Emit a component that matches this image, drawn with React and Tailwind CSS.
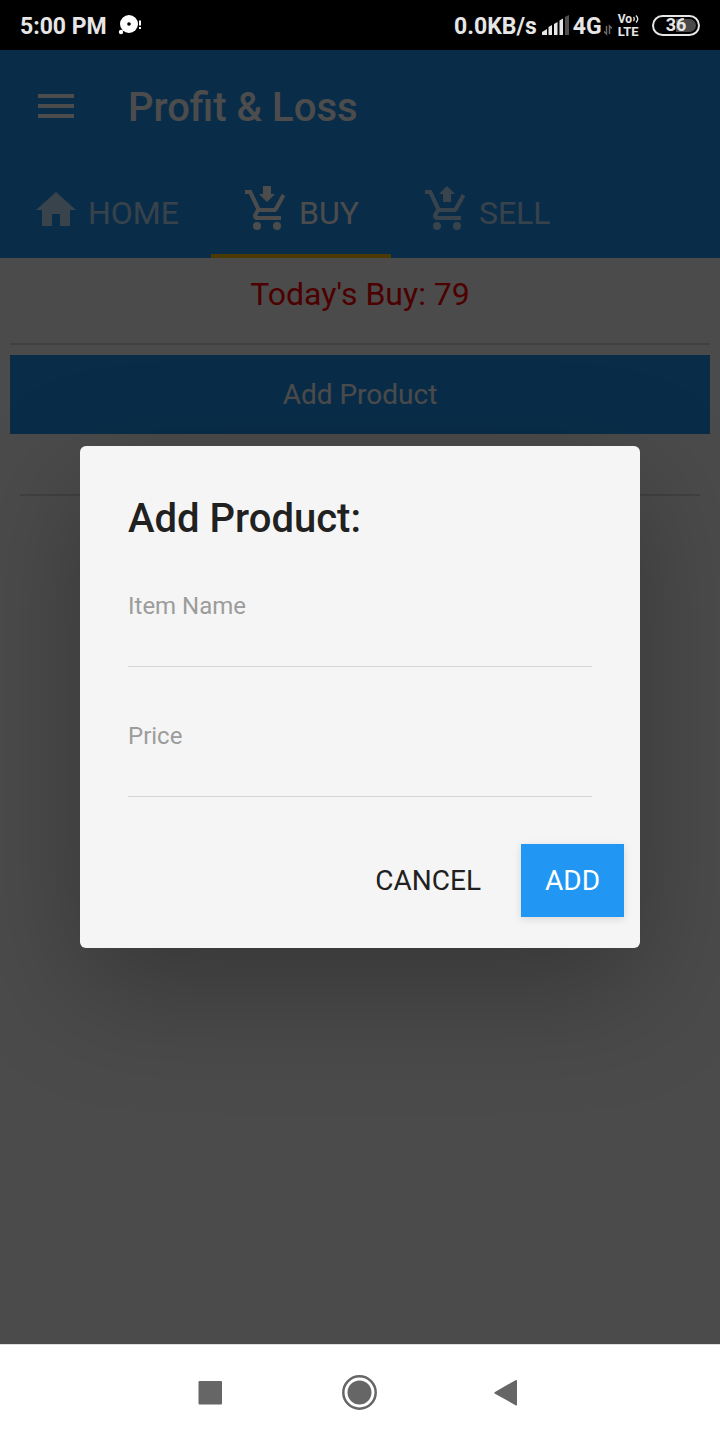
const CART =
  "M7 18a2 2 0 1 0 0 4 2 2 0 0 0 0-4zm10 0a2 2 0 1 0 0 4 2 2 0 0 0 0-4zM7.17 14.75l.03-.12.9-1.63h7.45c.75 0 1.41-.41 1.75-1.03l3.86-7.01L19.42 4h-.01l-1.1 2-2.76 5H8.53l-.13-.27L6.16 6l-.95-2-.94-2H1v2h2l3.6 7.59-1.35 2.45c-.16.28-.25.61-.25.96 0 1.1.9 2 2 2h12v-2H7.42c-.13 0-.25-.11-.25-.25z";
const HOME = "M10 20v-6h4v6h5v-8h3L12 3 2 12h3v8z";
const ARROW_DOWN = "M10 0h4v4h2l-4 4-4-4h2z";
const ARROW_UP = "M12 0l4 4h-2v4h-4V4H8z";

const tabs = [
  { label: "HOME", paths: [HOME] },
  { label: "BUY", paths: [CART, ARROW_DOWN], active: true },
  { label: "SELL", paths: [CART, ARROW_UP] },
];

function StatusBar() {
  return (
    <div className="flex h-[50px] items-center justify-between bg-black px-5 text-[23px] font-bold text-[#e6e6e6]">
      <div className="flex items-center gap-2.5">
        <span className="pt-1">5:00 PM</span>
        <svg className="h-6 w-6" viewBox="0 0 24 24" fill="#fff" aria-hidden="true">
          <circle cx="12" cy="11" r="9" />
          <circle cx="12" cy="11" r="1.8" fill="#000" />
          <circle cx="4" cy="19" r="2.2" />
          <path d="M22 7.500h2v5h-2zM22 14h2v2h-2z" />
        </svg>
      </div>
      <div className="flex items-center">
        <span className="pt-1">0.0KB/s</span>
        <svg className="ml-1 h-6 w-7" viewBox="0 0 28 24" fill="#e6e6e6" aria-hidden="true">
          <path d="M1 22v-3l5-3v6zM7.500 22v-8l3.500-2v10zM13 22V11l3.500-2v13zM18.500 22V7.500l3.500-2V22z" />
          <path d="M24 22V4l4-2v20z" fill="#4f4f4f" />
        </svg>
        <span className="ml-1 pt-1">4G</span>
        <svg className="ml-0.5 h-6 w-2" viewBox="0 0 8 24" fill="none" stroke="#6a6a6a" strokeWidth="1.5" aria-hidden="true">
          <path d="M2.500 13v8L0 18.500M5.500 21v-8L8 15.500" />
        </svg>
        <div className="ml-1.5 flex flex-col">
          <span className="flex items-center text-xs leading-3">
            Vo
            <svg className="h-2 w-2" viewBox="0 0 8 8" fill="none" stroke="#e6e6e6" strokeWidth="1.300" aria-hidden="true">
              <path d="M1.500 2q1.500 2 0 4M4 .5q3.500 3.500 0 7" />
            </svg>
          </span>
          <span className="text-[13px] leading-[13px]">LTE</span>
        </div>
        <div className="ml-3 flex h-[21px] w-12 items-center justify-center rounded-full border-2 border-[#e6e6e6] bg-linear-to-r from-black from-50% to-[#4a4a4a] to-50% bg-clip-content p-0.5 text-lg leading-4">
          36
        </div>
      </div>
    </div>
  );
}

function Field({ id, label }) {
  return (
    <div className="flex flex-col">
      <label htmlFor={id} className="text-2xl leading-7 text-[#9c9c9c]">
        {label}
      </label>
      <input
        id={id}
        className="h-[47px] w-full border-b border-[#d5d5d5] bg-transparent text-[28px] text-[#212121] outline-none"
      />
    </div>
  );
}

function ProductDialog() {
  return (
    <form
      role="dialog"
      aria-labelledby="dialog-title"
      className="w-full rounded-md bg-[#f5f5f5] shadow-[0_40px_120px_rgba(0,0,0,0.28)]"
      onSubmit={(e) => e.preventDefault()}
    >
      <div className="px-12 pt-[49px]">
        <h2 id="dialog-title" className="text-[40px] leading-12 font-medium text-[#212121]">
          Add Product:
        </h2>
        <div className="mt-[49px] flex flex-col gap-[55px]">
          <Field id="item-name" label="Item Name" />
          <Field id="price" label="Price" />
        </div>
      </div>
      <div className="flex justify-end gap-4 px-4 pt-[47px] pb-[31px] text-[28px]">
        <button type="button" className="h-[73px] px-6 text-[#212121]">
          CANCEL
        </button>
        <button
          type="submit"
          className="h-[73px] bg-[#2196f3] px-6 text-white shadow-[0_2px_8px_rgba(0,0,0,0.12)]"
        >
          ADD
        </button>
      </div>
    </form>
  );
}

export default function App() {
  return (
    <div className="flex min-h-screen flex-col font-['Roboto',sans-serif]">
      <StatusBar />
      <div className="relative flex flex-1 flex-col bg-[#fafafa]">
        <header className="bg-[#2196f3] text-white">
          <div className="flex h-28 items-center gap-12 px-8">
            <button type="button" aria-label="Open menu" className="h-12 w-12">
              <svg className="h-12 w-12" viewBox="0 0 24 24" fill="currentColor" aria-hidden="true">
                <path d="M3 18h18v-2H3zm0-5h18v-2H3zm0-7v2h18V6z" />
              </svg>
            </button>
            <h1 className="pt-1 text-[40px] font-medium">Profit &amp; Loss</h1>
          </div>
          <nav className="flex h-24">
            {tabs.map((tab) => (
              <button
                key={tab.label}
                type="button"
                className={
                  tab.active
                    ? "flex items-center gap-2 border-y-4 border-t-transparent border-b-[#ffc107] px-8 text-[32px]"
                    : "flex items-center gap-2 border-y-4 border-transparent px-8 text-[32px] text-white/70"
                }
              >
                <svg className="h-12 w-12" viewBox="0 0 24 24" fill="currentColor" aria-hidden="true">
                  {tab.paths.map((d) => (
                    <path key={d} d={d} />
                  ))}
                </svg>
                <span className="pt-1.5">{tab.label}</span>
              </button>
            ))}
          </nav>
        </header>

        <main className="flex flex-col p-2.5">
          <p className="h-[75px] text-center text-[32px] leading-[52px] text-[#ff0000]">Today's Buy: 79</p>
          <hr className="border-t-2 border-black/12" />
          <button type="button" className="mt-2.5 h-[79px] bg-[#2196f3] text-[28px] text-white">
            Add Product
          </button>
          <hr className="mx-2.5 mt-[60px] border-t-2 border-black/12" />
        </main>

        <div className="absolute inset-0 flex items-center overflow-hidden bg-black/70 px-20">
          <ProductDialog />
        </div>
      </div>

      <div className="flex h-24 items-center justify-center border-t border-[#dedede] bg-white text-[#666666]">
        <button type="button" aria-label="Recent apps" className="flex w-[150px] justify-center">
          <svg className="h-12 w-12" viewBox="0 0 48 48" fill="currentColor" aria-hidden="true">
            <rect x="12.500" y="12" width="23.500" height="23.500" rx="1" />
          </svg>
        </button>
        <button type="button" aria-label="Home" className="flex w-[150px] justify-center">
          <svg className="h-12 w-12" viewBox="0 0 48 48" fill="currentColor" aria-hidden="true">
            <circle cx="23.500" cy="23.500" r="12" />
            <circle cx="23.500" cy="23.500" r="16.200" fill="none" stroke="currentColor" strokeWidth="2.500" />
          </svg>
        </button>
        <button type="button" aria-label="Back" className="flex w-[150px] justify-center">
          <svg className="h-12 w-12" viewBox="0 0 48 48" fill="currentColor" aria-hidden="true">
            <path d="M9 22.900 29.500 11.200q1.500-.8 1.500.7v23.600q0 1.500-1.500.7L9 24.700q-1.500-.9 0-1.800z" />
          </svg>
        </button>
      </div>
    </div>
  );
}
